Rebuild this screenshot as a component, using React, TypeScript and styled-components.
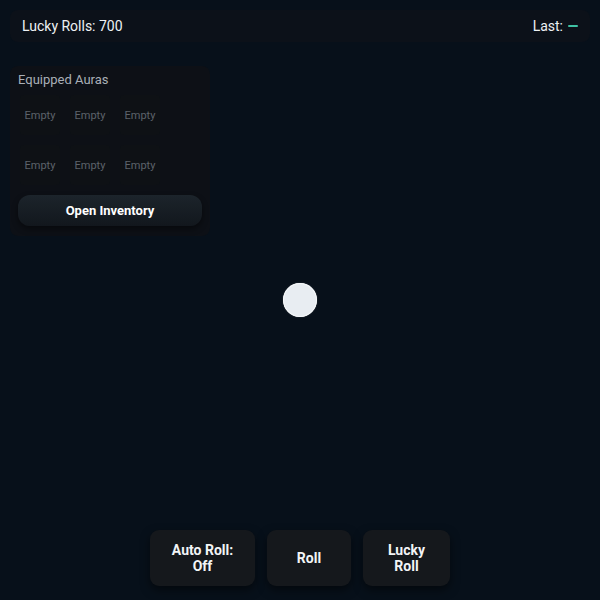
import React from "react";
import styled, { createGlobalStyle } from "styled-components";

const Global = createGlobalStyle`
  html, body { margin: 0; padding: 0; background: #07101a; }
  body { font-family: Roboto, "Noto Sans", sans-serif; color: #e8edf2; }
  #root { width: 600px; height: 600px; }
`;

const Page = styled.div`
  width: 600px;
  height: 600px;
  background: #07101a;
  display: flex;
  flex-direction: column;
  box-sizing: border-box;
  padding: 10px;
  position: relative;
  overflow: hidden;
`;

const TopBar = styled.div`
  display: flex;
  justify-content: space-between;
  align-items: center;
  height: 32px;
  padding: 0 12px;
  background: #0c1119;
  border-radius: 8px;
  font-size: 14px;
  color: #eef1f4;
`;

const Last = styled.span`
  display: flex;
  align-items: center;
  gap: 5px;
`;

const Dash = styled.span`
  width: 10px;
  height: 2px;
  background: #3fc2a4;
  border-radius: 1px;
`;

const Panel = styled.div`
  margin-top: 24px;
  width: 200px;
  box-sizing: border-box;
  padding: 6px 8px 10px;
  background: #0d1016;
  border-radius: 8px;
  display: flex;
  flex-direction: column;
`;

const PanelTitle = styled.div`
  font-size: 13px;
  color: #a9afb6;
  margin-bottom: 8px;
`;

const Grid = styled.div`
  display: grid;
  grid-template-columns: repeat(3, 40px);
  grid-auto-rows: 40px;
  column-gap: 10px;
  row-gap: 10px;
  margin-left: 2px;
`;

const Slot = styled.div`
  background: #0e1115;
  border-radius: 4px;
  display: flex;
  align-items: center;
  justify-content: center;
  font-size: 11px;
  color: #5d636b;
`;

const InvButton = styled.button`
  margin-top: 10px;
  height: 31px;
  border: none;
  border-radius: 12px;
  background: linear-gradient(180deg, #1c242b 0%, #12171d 100%);
  box-shadow: 0 3px 6px rgba(0, 0, 0, 0.45);
  color: #ffffff;
  font-family: Roboto, sans-serif;
  font-weight: 700;
  font-size: 13px;
`;

const Center = styled.div`
  flex: 1;
  display: flex;
  align-items: flex-start;
  justify-content: center;
  padding-top: 47px;
`;

const Orb = styled.div`
  width: 34px;
  height: 34px;
  border-radius: 50%;
  background: #e8edf2;
  box-shadow: inset 0 0 0 1px #f6f8fa, 0 0 2px rgba(255,255,255,0.2);
`;

const Controls = styled.div`
  display: flex;
  justify-content: center;
  gap: 12px;
  padding-bottom: 4px;
`;

const CtrlButton = styled.button<{ $w: number }>`
  width: ${(p) => p.$w}px;
  height: 56px;
  border: none;
  border-radius: 9px;
  background: #15181c;
  box-shadow: 0 4px 10px rgba(0, 0, 0, 0.5);
  color: #f2f4f6;
  font-family: Roboto, sans-serif;
  font-weight: 700;
  font-size: 14px;
  line-height: 16px;
  padding: 0 8px;
`;

export default function App() {
  return (
    <>
      <Global />
      <Page>
        <TopBar>
          <span>Lucky Rolls: 700</span>
          <Last>
            Last: <Dash />
          </Last>
        </TopBar>
        <Panel>
          <PanelTitle>Equipped Auras</PanelTitle>
          <Grid>
            {Array.from({ length: 6 }).map((_, i) => (
              <Slot key={i}>Empty</Slot>
            ))}
          </Grid>
          <InvButton>Open Inventory</InvButton>
        </Panel>
        <Center>
          <Orb />
        </Center>
        <Controls>
          <CtrlButton $w={105}>Auto Roll:<br />Off</CtrlButton>
          <CtrlButton $w={84}>Roll</CtrlButton>
          <CtrlButton $w={87}>Lucky<br />Roll</CtrlButton>
        </Controls>
      </Page>
    </>
  );
}
